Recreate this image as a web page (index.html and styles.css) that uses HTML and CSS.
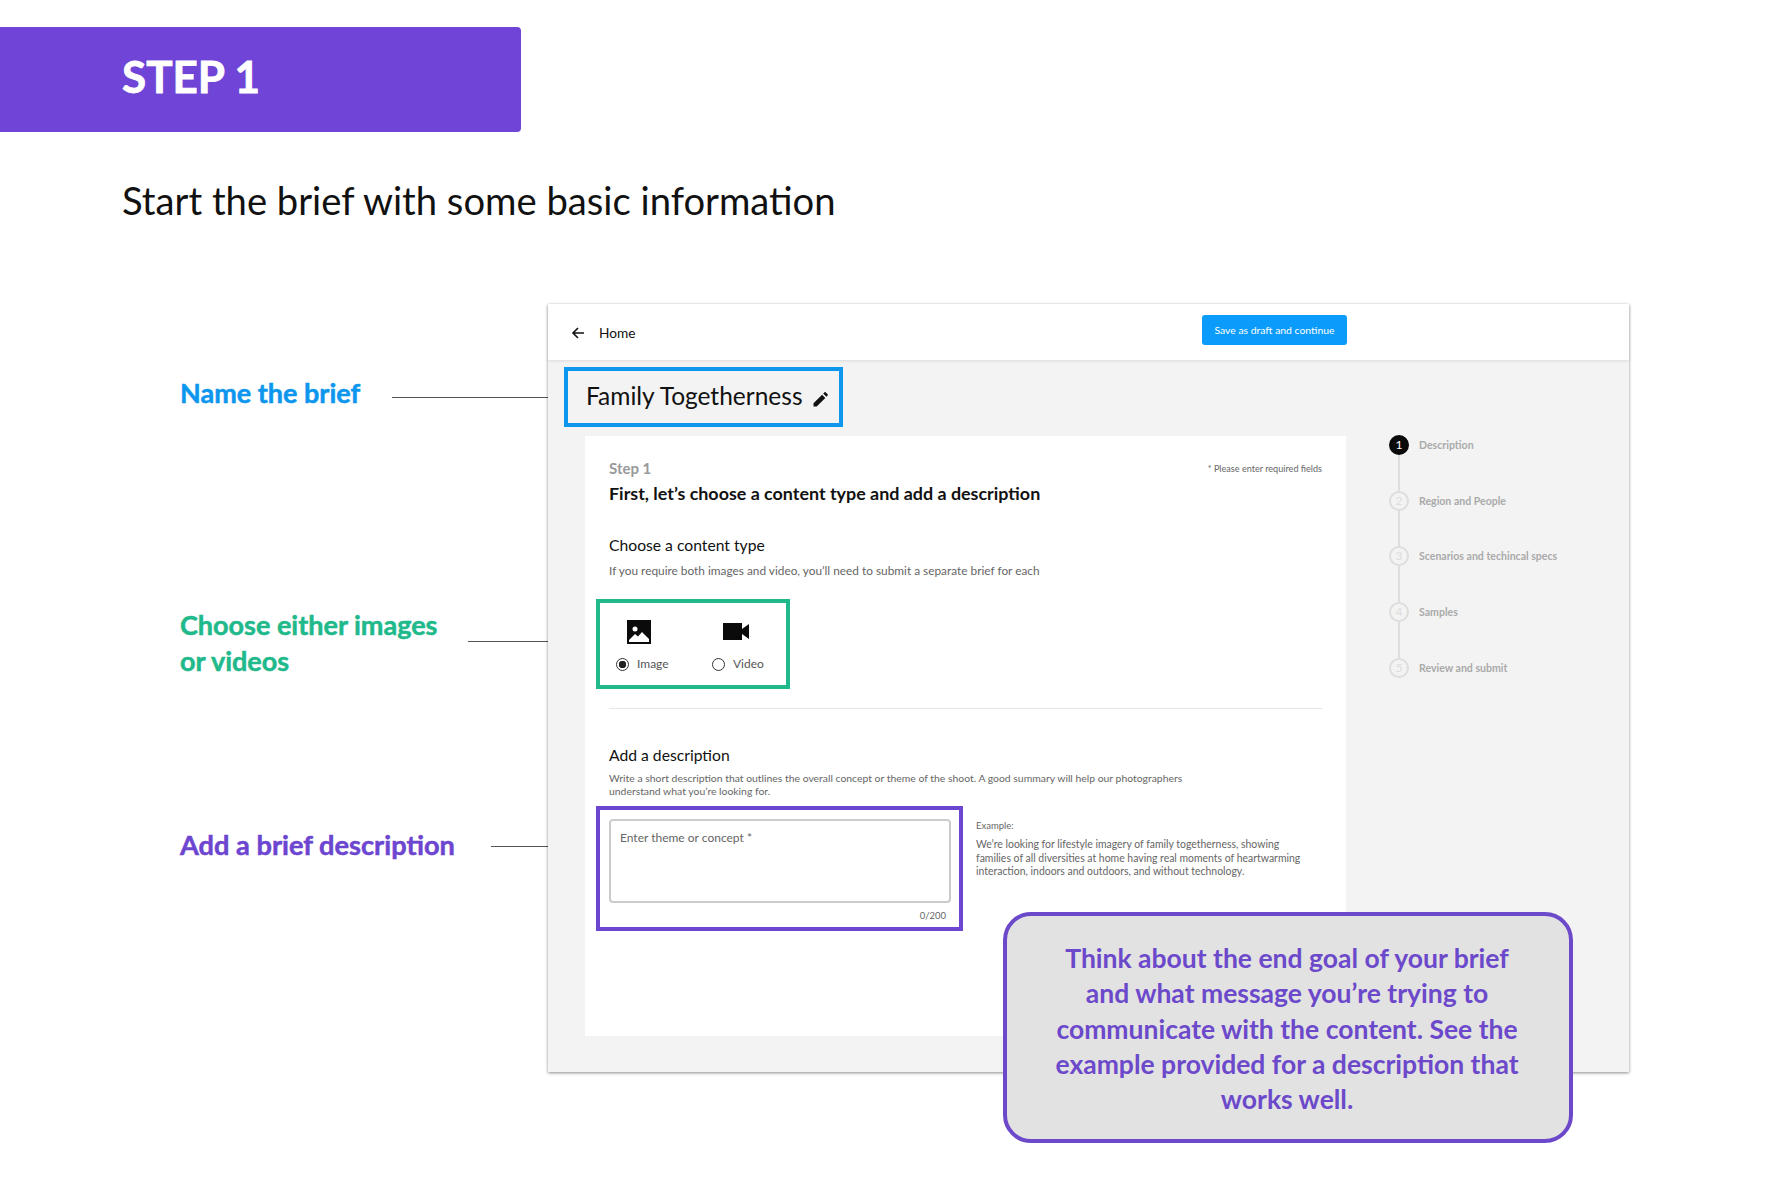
FILE: index.html
```html
<!DOCTYPE html>
<html lang="en">

<head>
  <meta charset="UTF-8">
  <meta name="viewport" content="width=device-width, initial-scale=1.0" />
  <title>Step 1</title>
  <link rel="stylesheet" href="styles.css">
</head>

<body>
  <div class="banner">STEP 1</div>
  <h1 class="subtitle">Start the brief with some basic information</h1>

  <div class="stage">
    <div class="notes">
      <div class="note note-blue">
        <span class="note-label">Name the brief</span>
        <span class="note-line"></span>
      </div>
      <div class="note note-green">
        <span class="note-label">Choose either images<br>or videos</span>
        <span class="note-line"></span>
      </div>
      <div class="note note-purple">
        <span class="note-label">Add a brief description</span>
        <span class="note-line"></span>
      </div>
    </div>

    <div class="panel">
      <div class="panel-header">
        <div class="back-link">
          <svg class="back-arrow" viewBox="0 0 14 14" width="14" height="14">
            <path d="M13 7H2M7 2 2 7l5 5" fill="none" stroke="#111" stroke-width="1.6" />
          </svg>
          <span>Home</span>
        </div>
        <div class="save-btn">Save as draft and continue</div>
      </div>

      <div class="title-box">
        <span>Family Togetherness</span>
        <svg class="pencil" viewBox="0 0 16 16" width="16" height="16">
          <path d="M1.5 15.5v-3.2l8.6-8.6 3.2 3.2-8.6 8.6zM11.2 2.6l1.2-1.2c.4-.4 1-.4 1.4 0l1.800 1.800c.4.4.4 1 0 1.400l-1.200 1.200z" fill="#111" />
        </svg>
      </div>

      <div class="panel-body">
        <div class="card">
          <div class="card-top">
            <span class="step-label">Step 1</span>
            <span class="required">* Please enter required fields</span>
          </div>
          <h2 class="card-title">First, let’s choose a content type and add a description</h2>

          <h3 class="section-title section-first">Choose a content type</h3>
          <p class="helper">If you require both images and video, you’ll need to submit a separate brief for each</p>

          <div class="type-box">
            <div class="type-option">
              <svg class="type-icon" viewBox="0 0 24 24" width="24" height="24">
                <rect width="24" height="24" fill="#0b0b0b" />
                <circle cx="8" cy="9" r="2.500" fill="#fff" />
                <path d="M2 22v-2l6-6 3 2.500 4-4.500 7 7v3z" fill="#fff" />
              </svg>
              <div class="type-choice">
                <span class="radio radio-on"></span>
                <span>Image</span>
              </div>
            </div>
            <div class="type-option">
              <svg class="type-icon" viewBox="0 0 26 24" width="26" height="24">
                <path d="M0 3h19v6l7-5v15l-7-5v6H0z" fill="#0b0b0b" />
              </svg>
              <div class="type-choice">
                <span class="radio"></span>
                <span>Video</span>
              </div>
            </div>
          </div>

          <hr class="divider">

          <h3 class="section-title">Add a description</h3>
          <p class="hint">Write a short description that outlines the overall concept or theme of the shoot. A good summary will help our photographers<br>understand what you’re looking for.</p>

          <div class="desc-row">
            <div class="desc-box">
              <div class="textarea">Enter theme or concept *</div>
              <div class="counter">0/200</div>
            </div>
            <div class="example">
              <div class="example-label">Example:</div>
              <p class="example-text">We’re looking for lifestyle imagery of family togetherness, showing<br>families of all diversities at home having real moments of heartwarming<br>interaction, indoors and outdoors, and without technology.</p>
            </div>
          </div>
        </div>

        <ol class="stepper">
          <li class="step step-active"><span class="step-num">1</span>Description</li>
          <li class="step"><span class="step-num">2</span>Region and People</li>
          <li class="step"><span class="step-num">3</span>Scenarios and techincal specs</li>
          <li class="step"><span class="step-num">4</span>Samples</li>
          <li class="step"><span class="step-num">5</span>Review and submit</li>
        </ol>
      </div>
    </div>

    <div class="callout">Think about the end goal of your brief<br>and what message you’re trying to<br>communicate with the content. See the<br>example provided for a description that<br>works well.</div>
  </div>
</body>

</html>
```

FILE: styles.css
```css
* {
  box-sizing: border-box;
  margin: 0;
  padding: 0;
}

body {
  display: flow-root;
  min-height: 1182px;
  font-family: Lato, 'Open Sans', sans-serif;
  background: #fff;
  color: #111;
}

.banner {
  width: 521px;
  height: 105px;
  margin-top: 27px;
  padding: 19px 0 0 122px;
  background: #7044d6;
  border-radius: 0 4px 4px 0;
  color: #fff;
  font-size: 44px;
  font-weight: 700;
  line-height: 60px;
  -webkit-text-stroke: 0.8px #fff;
}

.subtitle {
  margin: 45px 0 0 122px;
  font-size: 38.200px;
  font-weight: 400;
  line-height: 46px;
}

.stage {
  position: relative;
  display: flex;
  margin-top: 81px;
}

/* Left hand labels */
.notes {
  width: 548px;
  padding-left: 180px;
  flex-shrink: 0;
}

.note {
  display: flex;
  font-weight: 700;
  font-size: 27px;
  line-height: 32px;
  -webkit-text-stroke: 0.5px currentColor;
}

.note-label {
  margin-right: 31px;
}

.note-line {
  flex: 1;
  height: 1px;
  background: #555;
}

.note-blue {
  margin-top: 73px;
  color: #0d96ee;
}

.note-blue .note-line {
  margin-top: 20px;
}

.note-blue .note-label {
  margin-right: 32px;
}

.note-green {
  margin-top: 198px;
  color: #1fb98b;
  line-height: 35.500px;
}

.note-green .note-line {
  margin-top: 34px;
}

.note-purple {
  margin-top: 151px;
  color: #6c45d0;
  font-size: 27.200px;
}

.note-purple .note-line {
  margin-top: 17px;
}

.note-purple .note-label {
  margin-right: 36px;
}

/* Screenshot panel */
.panel {
  width: 1081px;
  height: 768px;
  background: #f3f3f3;
  box-shadow: 0 1px 3px rgba(0, 0, 0, 0.45);
}

.panel-header {
  display: flex;
  justify-content: space-between;
  align-items: flex-start;
  height: 56px;
  padding: 11px 282px 0 23px;
  background: #fff;
  box-shadow: 0 1px 3px rgba(0, 0, 0, 0.1);
}

.back-link {
  display: flex;
  align-items: center;
  gap: 14px;
  margin-top: 8px;
  font-size: 13.700px;
  line-height: 20px;
}

.save-btn {
  width: 145px;
  height: 30px;
  background: #0a9bfb;
  border-radius: 3px;
  color: #fff;
  font-size: 10.400px;
  line-height: 30px;
  text-align: center;
}

.title-box {
  display: inline-flex;
  align-items: center;
  gap: 9px;
  width: 279px;
  height: 60px;
  margin: 7px 0 0 16px;
  padding: 0 0 3px 18px;
  border: 4px solid #0d96ee;
  font-size: 24.500px;
  line-height: 48px;
}

.pencil {
  margin-top: 6px;
}

.panel-body {
  display: flex;
  align-items: flex-start;
  margin: 9px 0 0 37px;
}

.card {
  width: 761px;
  height: 600px;
  padding: 23px 24px 0;
  background: #fff;
}

.card-top {
  display: flex;
  justify-content: space-between;
  align-items: center;
}

.step-label {
  color: #999;
  font-size: 15px;
  font-weight: 700;
  line-height: 18px;
}

.required {
  color: #666;
  font-size: 9.100px;
}

.card-title {
  margin-top: 5px;
  font-size: 17.900px;
  font-weight: 700;
  line-height: 22px;
}

.section-title {
  margin-top: 36px;
  font-size: 15.700px;
  font-weight: 400;
  line-height: 20px;
}

.section-first {
  margin-top: 31px;
}

.helper {
  margin-top: 8px;
  color: #666;
  font-size: 11.850px;
  line-height: 16px;
}

.type-box {
  display: flex;
  width: 194px;
  height: 90px;
  margin: 20px 0 0 -13px;
  padding: 17px 0 0 16px;
  border: 4px solid #1fb98b;
}

.type-option {
  flex-shrink: 0;
  width: 96px;
}

.type-icon {
  display: block;
  margin-left: 11px;
}

.type-choice {
  display: flex;
  align-items: center;
  gap: 8px;
  margin-top: 12px;
  color: #555;
  font-size: 12px;
  line-height: 16px;
}

.radio {
  width: 13px;
  height: 13px;
  border: 1.500px solid #333;
  border-radius: 50%;
  background: #fff;
}

.radio-on {
  background: radial-gradient(circle, #222 0 3.500px, #fff 4px);
}

.divider {
  margin-top: 19px;
  border: none;
  border-top: 1px solid #e6e6e6;
}

.hint {
  margin-top: 7px;
  color: #666;
  font-size: 10.400px;
  line-height: 13px;
}

.desc-row {
  display: flex;
  margin: 8px 0 0 -13px;
}

.desc-box {
  flex-shrink: 0;
  width: 367px;
  height: 125px;
  padding: 9px 8px 0 9px;
  border: 4px solid #6c45d0;
}

.textarea {
  height: 84px;
  padding: 9px;
  border: 2px solid #ccc;
  border-radius: 4px;
  color: #666;
  font-size: 12px;
  line-height: 16px;
}

.counter {
  margin-top: 7px;
  padding-right: 5px;
  color: #666;
  font-size: 9.500px;
  line-height: 12px;
  text-align: right;
}

.example {
  margin: 14px 0 0 13px;
}

.example-label {
  color: #666;
  font-size: 9.500px;
  line-height: 12px;
}

.example-text {
  margin-top: 6px;
  color: #666;
  font-size: 10.450px;
  line-height: 13.500px;
}

/* Progress on the right */
.stepper {
  display: flex;
  flex-direction: column;
  gap: 35.670px;
  margin: -1px 0 0 43px;
  list-style: none;
}

.step {
  position: relative;
  display: flex;
  align-items: center;
  gap: 10px;
  height: 20px;
  color: #aaa;
  font-size: 10.550px;
  font-weight: 700;
}

.step:not(:last-child)::after {
  content: "";
  position: absolute;
  left: 9px;
  top: 20px;
  width: 2px;
  height: 36px;
  background: #ddd;
}

.step-num {
  width: 20px;
  height: 20px;
  border: 2px solid #ddd;
  border-radius: 50%;
  color: #ddd;
  font-size: 12px;
  font-weight: 400;
  line-height: 16px;
  text-align: center;
}

.step-active .step-num {
  background: #0a0a0a;
  border-color: #0a0a0a;
  color: #fff;
}

/* Tip that lies over the panel */
.callout {
  position: absolute;
  left: 1003px;
  top: 608px;
  width: 570px;
  height: 231px;
  padding: 25px 2px 0 0;
  background: #e2e2e2;
  border: 4px solid #6c49cb;
  border-radius: 28px;
  color: #6c49cb;
  font-size: 26.500px;
  font-weight: 700;
  line-height: 35.300px;
  text-align: center;
}
```
